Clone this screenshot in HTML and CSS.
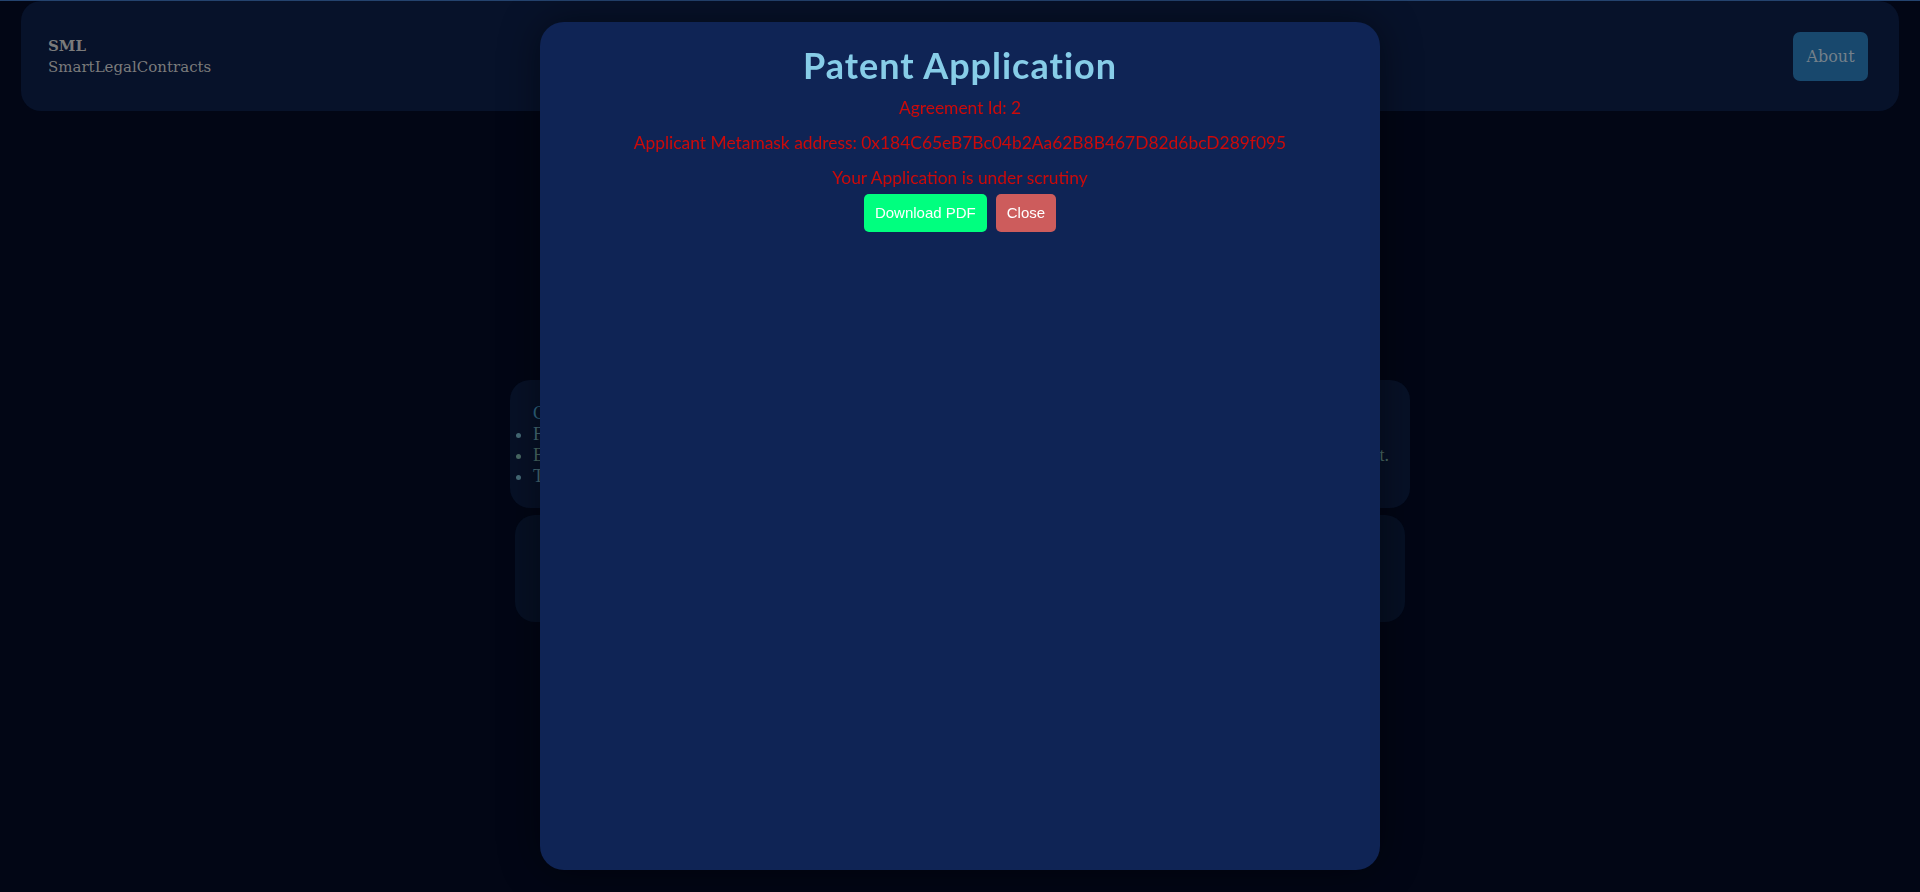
FILE: index.html
```html
<!DOCTYPE html>
<html lang="en">
<head>
<meta charset="utf-8">
<title>SmartLegalContracts</title>
<link rel="stylesheet" href="styles.css">
</head>
<body>
<div class="topline"></div>
<header class="navbar">
  <div class="brand">
    <div class="brand-short">SML</div>
    <div class="brand-long">SmartLegalContracts</div>
  </div>
  <button class="about-btn">About</button>
</header>

<main class="content">
  <section class="info-card">
    <p class="info-lead">Create and manage your patent agreements securely using smart legal contracts on the blockchain.</p>
    <ul class="info-list">
      <li>Fill in the application form with the details of your invention and submit it.</li>
      <li class="full">Every application is recorded on the Ethereum network and linked to your own Metamask account.</li>
      <li>Track the status of your application at any time.</li>
    </ul>
  </section>
  <section class="form-card"></section>
</main>

<div class="overlay">
  <div class="modal">
    <h2 class="modal-title">Patent Application</h2>
    <p class="modal-line">Agreement Id: 2</p>
    <p class="modal-line">Applicant Metamask address: 0x184C65eB7Bc04b2Aa62B8B467D82d6bcD289f095</p>
    <p class="modal-line last">Your Application is under scrutiny</p>
    <div class="modal-actions">
      <button class="btn btn-download">Download PDF</button>
      <button class="btn btn-close">Close</button>
    </div>
  </div>
</div>
</body>
</html>
```

FILE: styles.css
```css
html, body {
  margin: 0;
  padding: 0;
}
body {
  background: #020615;
  font-family: "Liberation Serif", serif;
  height: 892px;
  overflow: hidden;
}
.topline {
  height: 1px;
  background: #24436e;
}
.navbar {
  margin: 0 21px;
  height: 110px;
  background: #07122a;
  border-radius: 20px;
  display: flex;
  align-items: center;
  justify-content: space-between;
  padding: 0 31px 0 27px;
}
.brand {
  font-family: "DejaVu Serif", serif;
  font-size: 15px;
  line-height: 21px;
  color: #7b7b7b;
  margin-top: 2px;
}
.brand-short {
  font-weight: bold;
}
.about-btn {
  width: 75px;
  height: 49px;
  border: 0;
  border-radius: 7px;
  background: #18486d;
  color: #74808a;
  font-family: "DejaVu Serif", serif;
  font-size: 16px;
  padding: 0;
}
.content {
  display: flex;
  flex-direction: column;
  align-items: center;
  padding-top: 269px;
  gap: 7px;
}
.info-card {
  width: 900px;
  box-sizing: border-box;
  height: 128px;
  background: #071127;
  border-radius: 20px;
  padding: 23px 21px 0 23px;
  color: #466c78;
  font-size: 18px;
  line-height: 21px;
  overflow: hidden;
}
.info-lead {
  margin: 0;
  color: #2f6783;
  white-space: nowrap;
}
.info-list {
  margin: 0;
  padding: 0;
  list-style: disc outside;
  white-space: nowrap;
}
.info-list .full {
  white-space: normal;
  text-align: justify;
  text-align-last: justify;
  color: #4a6b66;
}
.form-card {
  width: 890px;
  height: 107px;
  background: #061024;
  border-radius: 20px;
}
.overlay {
  position: fixed;
  inset: 0;
  display: flex;
  align-items: center;
  justify-content: center;
}
.modal {
  width: 840px;
  height: 848px;
  box-sizing: border-box;
  background: #0f2455;
  border-radius: 24px;
  box-shadow: 0 0 40px rgba(0, 0, 0, 0.45);
  padding-top: 22px;
  display: flex;
  flex-direction: column;
  align-items: center;
  font-family: Lato, "Open Sans", sans-serif;
}
.modal-title {
  margin: 0 0 12px;
  font-size: 36px;
  line-height: 42px;
  letter-spacing: 1px;
  font-weight: bold;
  color: #87cde8;
}
.modal-line {
  margin: 0 0 16px;
  font-size: 17.4px;
  line-height: 19px;
  color: #cc0a0a;
}
.modal-line.last {
  margin-bottom: 7px;
}
.modal-actions {
  display: flex;
  gap: 9px;
}
.btn {
  border: 0;
  border-radius: 5px;
  color: #ffffff;
  font-family: "Liberation Sans", Arial, sans-serif;
  font-size: 15px;
  line-height: 18px;
  padding: 10px 11px;
}
.btn-download {
  background: #00ff7f;
}
.btn-close {
  background: #cd5c5c;
}
```
